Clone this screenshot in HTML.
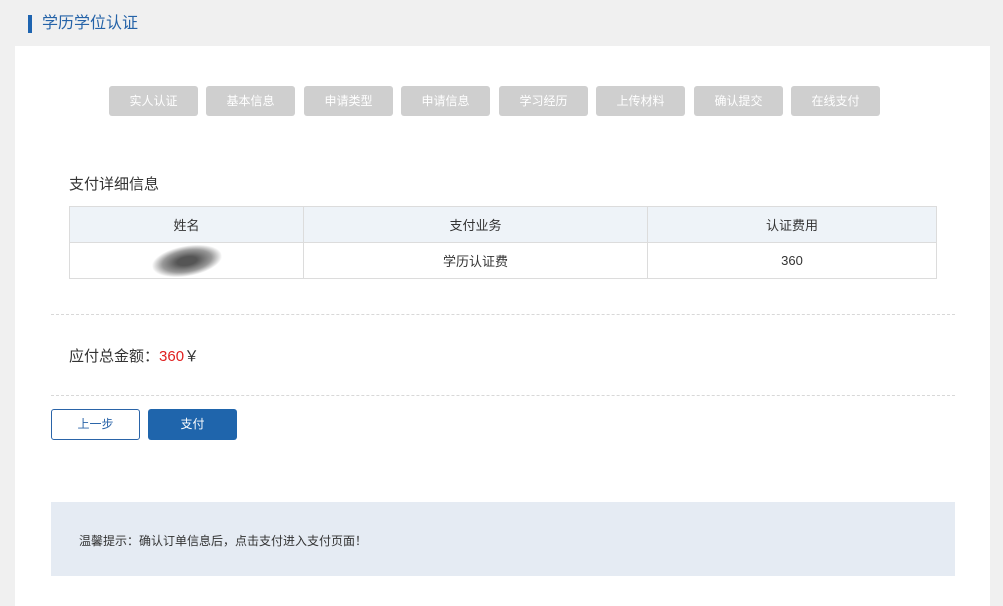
<!DOCTYPE html>
<html><head><meta charset="utf-8"><style>
*{margin:0;padding:0;box-sizing:border-box}
body{width:1003px;height:597px;background:#f0f0f0;font-family:"Liberation Sans","Noto Sans CJK SC",sans-serif;position:relative;overflow:hidden;color:#333}
.abs{position:absolute}
.bar{left:28px;top:15px;width:4px;height:18px;background:#1e64b0}
.title{left:42px;top:13px;font-size:16px;color:#2563a8;line-height:22px}
.panel{left:15px;top:46px;width:975px;height:560px;background:#fff}
.step{top:86px;width:89px;height:30px;background:#cfcfcf;border-radius:3px;color:#fff;font-size:12px;line-height:30px;text-align:center}
table{position:absolute;left:69px;top:206px;width:868px;border-collapse:collapse;font-size:13px}
td{border:1px solid #dcdcdc;height:36px;text-align:center;color:#333}
tr.h td{background:#eef3f8}
.dash{left:51px;width:904px;border-top:1px dashed #d8d8d8;height:0}
.btn{top:409px;height:31px;width:89px;border-radius:3px;font-size:12px;line-height:29px;text-align:center}
</style></head><body>
<div class="abs bar"></div>
<div class="abs title">学历学位认证</div>
<div class="abs panel"></div>
<div class="abs step" style="left:109px">实人认证</div>
<div class="abs step" style="left:206px">基本信息</div>
<div class="abs step" style="left:304px">申请类型</div>
<div class="abs step" style="left:401px">申请信息</div>
<div class="abs step" style="left:499px">学习经历</div>
<div class="abs step" style="left:596px">上传材料</div>
<div class="abs step" style="left:694px">确认提交</div>
<div class="abs step" style="left:791px">在线支付</div>
<div class="abs" style="left:69px;top:175px;font-size:15px;line-height:20px">支付详细信息</div>
<table>
<tr class="h"><td style="width:234px">姓名</td><td style="width:344px">支付业务</td><td>认证费用</td></tr>
<tr><td><div style="width:70px;height:30px;margin:0 auto;background:radial-gradient(ellipse,#555 20%,#999 50%,transparent 72%);transform:rotate(-10deg)"></div></td><td>学历认证费</td><td>360</td></tr>
</table>
<div class="abs dash" style="top:314px"></div>
<div class="abs" style="left:69px;top:346px;font-size:15px;line-height:20px">应付总金额<span style="font-family:'Noto Sans CJK SC',sans-serif">：</span><span style="color:#e02020">360</span>￥</div>
<div class="abs dash" style="top:395px"></div>
<div class="abs btn" style="left:51px;border:1px solid #2a64a8;color:#2a64a8;background:#fff">上一步</div>
<div class="abs btn" style="left:148px;background:#1f65ac;color:#fff;line-height:31px">支付</div>
<div class="abs" style="left:51px;top:502px;width:904px;height:74px;background:#e5ebf3"></div>
<div class="abs" style="left:79px;top:532px;font-size:12px;line-height:17px;color:#333;font-family:'Noto Sans CJK SC',sans-serif">温馨提示：确认订单信息后，点击支付进入支付页面！</div>
</body></html>
